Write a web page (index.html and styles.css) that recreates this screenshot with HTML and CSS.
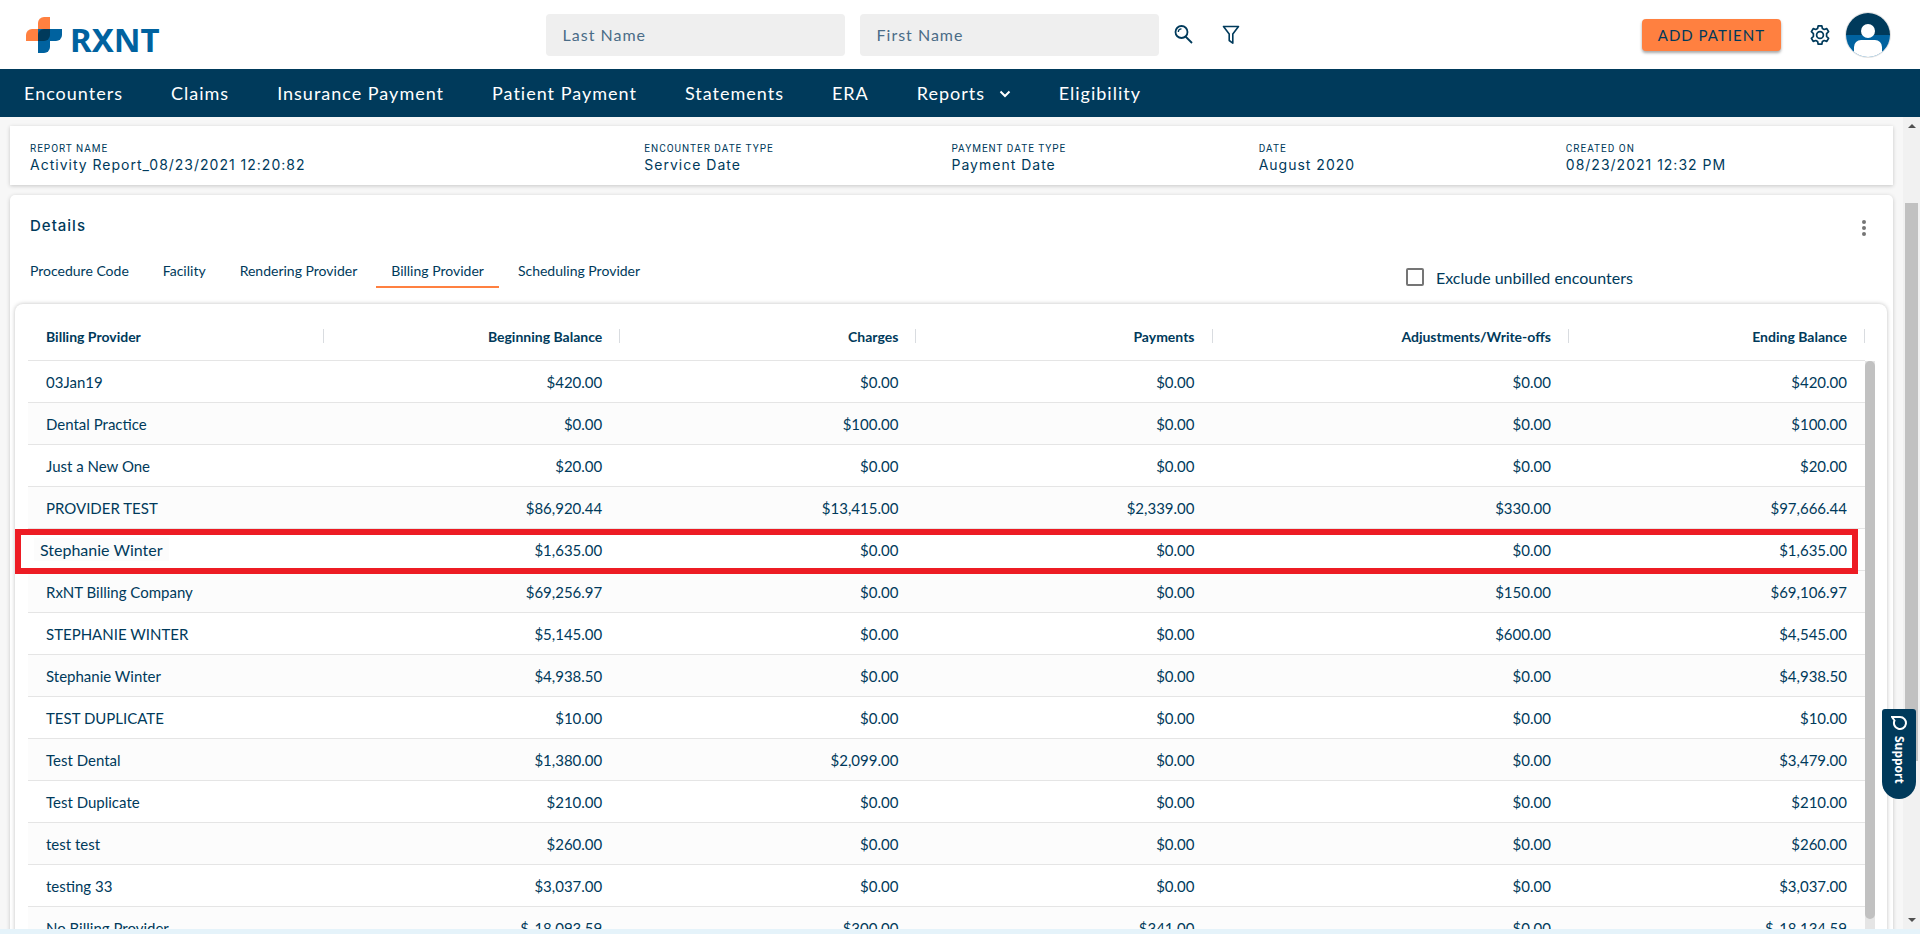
FILE: index.html
```
<!DOCTYPE html>
<html lang="en">
<head>
    <meta charset="UTF-8">
    <meta name="viewport" content="width=device-width, initial-scale=1.0">
    <title>RXNT - Activity Report</title>
    <link rel="stylesheet" href="styles.css">
</head>
<body>
    <header class="topbar">
        <a href="#" class="logo" aria-label="RXNT">
            <svg width="37" height="36" viewBox="0 0 37 36">
                <path d="M12 24V6a6 6 0 0 1 6-6h6v24z" fill="#ff8040"/>
                <path d="M0 24v-6a6 6 0 0 1 6-6h18v12z" fill="#ff8040"/>
                <path d="M12 12h24v6a6 6 0 0 1-6 6H12z" fill="#00629f"/>
                <path d="M12 12h12v18a6 6 0 0 1-6 6h-6z" fill="#00629f"/>
                <path d="M18 12h6v6a6 6 0 0 1-6 6h-6v-6a6 6 0 0 1 6-6z" fill="#003a5b"/>
            </svg>
            <span>RXNT</span>
        </a>
        <form class="search">
            <input type="text" placeholder="Last Name" aria-label="Last Name">
            <input type="text" placeholder="First Name" aria-label="First Name">
            <button type="button" class="icon-btn" aria-label="Search">
                <svg width="20" height="20" viewBox="0 0 20 20" fill="none" stroke="#003a5b" stroke-width="1.8">
                    <circle cx="7.5" cy="7" r="6"/>
                    <path d="M4.3 7A3.2 3.2 0 0 1 7.5 3.9" stroke-width="1.3"/>
                    <path d="M11.5 11.5L18 18"/>
                </svg>
            </button>
            <button type="button" class="icon-btn filter" aria-label="Filter">
                <svg width="18" height="20" viewBox="0 0 18 20" fill="none" stroke="#003a5b" stroke-width="1.6" stroke-linejoin="round">
                    <path d="M1.5 1.5h15L10.8 9v9.2L7.2 15.5V9z"/>
                </svg>
            </button>
        </form>
        <div class="actions">
            <button type="button" class="add">ADD PATIENT</button>
            <button type="button" class="icon-btn" aria-label="Settings">
                <svg width="22" height="22" viewBox="0 0 22 22" fill="none" stroke="#003a5b" stroke-width="1.7" stroke-linejoin="round">
                    <path d="M9.2 1.8h3.6l.6 2.7 1.8 1 2.6-.9 1.8 3.1-2 1.9v2.8l2 1.9-1.8 3.1-2.6-.9-1.8 1-.6 2.7H9.2l-.6-2.7-1.8-1-2.6.9-1.8-3.1 2-1.9V9.6l-2-1.9 1.8-3.1 2.6.9 1.8-1z"/>
                    <circle cx="11" cy="11" r="3.4"/>
                </svg>
            </button>
            <button type="button" class="icon-btn avatar" aria-label="Account">
                <svg width="46" height="46" viewBox="0 0 46 46">
                    <clipPath id="round"><circle cx="23" cy="23" r="22"/></clipPath>
                    <circle cx="23" cy="23" r="22.5" fill="#fff" stroke="#e2e2e2"/>
                    <g clip-path="url(#round)">
                        <rect width="46" height="23" fill="#003a5b"/>
                        <rect y="23" width="46" height="23" fill="#00629f"/>
                        <path d="M9 46V35a7 7 0 0 1 7-7h14a7 7 0 0 1 7 7v11z" fill="#fff"/>
                        <circle cx="23" cy="19" r="7" fill="#fff"/>
                    </g>
                </svg>
            </button>
        </div>
    </header>

    <nav class="menu">
        <a href="#">Encounters</a>
        <a href="#">Claims</a>
        <a href="#">Insurance Payment</a>
        <a href="#">Patient Payment</a>
        <a href="#">Statements</a>
        <a href="#">ERA</a>
        <a href="#">Reports
            <svg width="12" height="8" viewBox="0 0 12 8" fill="none" stroke="#fff" stroke-width="2"><path d="M1.5 1.5L6 6l4.5-4.5"/></svg>
        </a>
        <a href="#">Eligibility</a>
    </nav>

    <div class="page">
        <main class="content">
            <dl class="report">
                <div><dt>REPORT NAME</dt><dd>Activity Report_08/23/2021 12:20:82</dd></div>
                <div><dt>ENCOUNTER DATE TYPE</dt><dd>Service Date</dd></div>
                <div><dt>PAYMENT DATE TYPE</dt><dd>Payment Date</dd></div>
                <div><dt>DATE</dt><dd>August 2020</dd></div>
                <div><dt>CREATED ON</dt><dd>08/23/2021 12:32 PM</dd></div>
            </dl>

            <section class="details">
                <div class="details-head">
                    <h2>Details</h2>
                    <button type="button" class="icon-btn" aria-label="More">
                        <svg width="4" height="16" viewBox="0 0 4 16" fill="#757575">
                            <circle cx="2" cy="2" r="2"/><circle cx="2" cy="8" r="2"/><circle cx="2" cy="14" r="2"/>
                        </svg>
                    </button>
                </div>
                <div class="filters">
                    <div class="tabs">
                        <button type="button">Procedure Code</button>
                        <button type="button">Facility</button>
                        <button type="button">Rendering Provider</button>
                        <button type="button" class="active">Billing Provider</button>
                        <button type="button">Scheduling Provider</button>
                    </div>
                    <label class="exclude"><input type="checkbox"> Exclude unbilled encounters</label>
                </div>

                <div class="grid">
                    <div class="grid-body">
                        <table>
                            <thead>
                                <tr>
                                    <th>Billing Provider</th>
                                    <th>Beginning Balance</th>
                                    <th>Charges</th>
                                    <th>Payments</th>
                                    <th class="wide">Adjustments/Write-offs</th>
                                    <th>Ending Balance</th>
                                </tr>
                            </thead>
                            <tbody>
                                <tr><td>03Jan19</td><td>$420.00</td><td>$0.00</td><td>$0.00</td><td>$0.00</td><td>$420.00</td></tr>
                                <tr><td>Dental Practice</td><td>$0.00</td><td>$100.00</td><td>$0.00</td><td>$0.00</td><td>$100.00</td></tr>
                                <tr><td>Just a New One</td><td>$20.00</td><td>$0.00</td><td>$0.00</td><td>$0.00</td><td>$20.00</td></tr>
                                <tr><td>PROVIDER TEST</td><td>$86,920.44</td><td>$13,415.00</td><td>$2,339.00</td><td>$330.00</td><td>$97,666.44</td></tr>
                                <tr class="marked"><td><span>Stephanie Winter</span></td><td>$1,635.00</td><td>$0.00</td><td>$0.00</td><td>$0.00</td><td>$1,635.00</td></tr>
                                <tr><td>RxNT Billing Company</td><td>$69,256.97</td><td>$0.00</td><td>$0.00</td><td>$150.00</td><td>$69,106.97</td></tr>
                                <tr><td>STEPHANIE WINTER</td><td>$5,145.00</td><td>$0.00</td><td>$0.00</td><td>$600.00</td><td>$4,545.00</td></tr>
                                <tr><td>Stephanie Winter</td><td>$4,938.50</td><td>$0.00</td><td>$0.00</td><td>$0.00</td><td>$4,938.50</td></tr>
                                <tr><td>TEST DUPLICATE</td><td>$10.00</td><td>$0.00</td><td>$0.00</td><td>$0.00</td><td>$10.00</td></tr>
                                <tr><td>Test Dental</td><td>$1,380.00</td><td>$2,099.00</td><td>$0.00</td><td>$0.00</td><td>$3,479.00</td></tr>
                                <tr><td>Test Duplicate</td><td>$210.00</td><td>$0.00</td><td>$0.00</td><td>$0.00</td><td>$210.00</td></tr>
                                <tr><td>test test</td><td>$260.00</td><td>$0.00</td><td>$0.00</td><td>$0.00</td><td>$260.00</td></tr>
                                <tr><td>testing 33</td><td>$3,037.00</td><td>$0.00</td><td>$0.00</td><td>$0.00</td><td>$3,037.00</td></tr>
                                <tr><td>No Billing Provider</td><td>$-18,093.59</td><td>$300.00</td><td>$341.00</td><td>$0.00</td><td>$-18,134.59</td></tr>
                            </tbody>
                        </table>
                    </div>
                    <div class="grid-scroll"><div class="thumb"></div></div>
                </div>
            </section>
        </main>
        <div class="page-scroll">
            <svg width="8" height="4" viewBox="0 0 8 4"><path d="M0 4L4 0l4 4z" fill="#505050"/></svg>
            <div class="track"><div class="thumb"></div></div>
            <svg width="8" height="4" viewBox="0 0 8 4"><path d="M0 0l4 4 4-4z" fill="#505050"/></svg>
        </div>
    </div>
    <div class="bottom"></div>

    <button type="button" class="support">
        <svg width="16" height="16" viewBox="0 0 16 16" fill="none" stroke="#fff" stroke-width="2">
            <path d="M1 2h8a6 6 0 1 1-5.5 3.5z"/>
        </svg>
        <span>Support</span>
    </button>
</body>
</html>
```
FILE: styles.css
```
*, *::after {
    box-sizing: border-box;
}
body {
    margin: 0;
    height: 100vh;
    display: flex;
    flex-direction: column;
    overflow: hidden;
    background-color: #f7f7f7;
    color: #003a5b;
    font-family: Lato, "Open Sans", sans-serif;
    font-size: 15px;
}
button, input {
    font-family: inherit;
    color: inherit;
}
.icon-btn {
    display: flex;
    padding: 0;
    border: none;
    background: none;
    cursor: pointer;
}

/* top bar */
.topbar {
    flex: none;
    display: grid;
    grid-template-columns: 27% 1fr auto;
    align-items: center;
    height: 69px;
    padding: 0 29px 0 26px;
    background-color: white;
}
.logo {
    display: flex;
    align-items: flex-end;
    gap: 7px;
    color: #00629f;
    text-decoration: none;
}
.logo span {
    font-family: "Noto Sans", sans-serif;
    font-size: 33px;
    font-weight: bold;
    line-height: 26px;
}
.search {
    display: flex;
    align-items: center;
    gap: 15px;
    padding-left: 16px;
}
.search input {
    width: 299px;
    height: 42px;
    padding: 0 17px;
    border: none;
    border-radius: 4px;
    background-color: #efefef;
    font-size: 16px;
    letter-spacing: 1px;
}
.search input::placeholder {
    color: #4a6c87;
}
.filter {
    margin-left: 13px;
}
.actions {
    display: flex;
    align-items: center;
}
.add {
    height: 32px;
    margin-right: 28px;
    padding: 0 16px;
    border: none;
    border-radius: 4px;
    background-color: #ff8040;
    box-shadow: 0 2px 3px rgba(0, 0, 0, 0.35);
    font-size: 15px;
    letter-spacing: 1px;
    cursor: pointer;
}
.avatar {
    margin-left: 14px;
}

/* main menu */
.menu {
    flex: none;
    display: flex;
    align-items: center;
    gap: 48px;
    height: 48px;
    padding: 0 24px;
    background-color: #003a5b;
}
.menu a {
    color: white;
    font-size: 18px;
    letter-spacing: 1px;
    text-decoration: none;
}
.menu svg {
    margin-left: 8px;
    vertical-align: 2px;
}

/* page */
.page {
    flex: 1;
    display: flex;
    min-height: 0;
}
.content {
    flex: 1;
    display: flex;
    flex-direction: column;
    gap: 10px;
    min-width: 0;
    padding: 9px 10px 0;
    overflow: hidden;
}
.report {
    flex: none;
    display: grid;
    grid-template-columns: 2fr 1fr 1fr 1fr 1fr;
    margin: 0;
    padding: 16px 20px 11px;
    background-color: white;
    box-shadow: 0 1px 4px rgba(0, 0, 0, 0.2);
}
.report dt {
    font-family: Roboto, sans-serif;
    font-size: 10px;
    line-height: 14px;
    letter-spacing: 1px;
}
.report dd {
    margin: 0;
    font-family: Inter, sans-serif;
    font-size: 14px;
    line-height: 18px;
    letter-spacing: 1px;
}
.details {
    flex: none;
    padding: 0 6px 0 5px;
    border-radius: 5px;
    background-color: white;
    box-shadow: 0 1px 4px rgba(0, 0, 0, 0.2);
}
.details-head {
    display: flex;
    align-items: center;
    justify-content: space-between;
    height: 60px;
    padding: 0 21px 0 15px;
}
.details-head h2 {
    margin: 0;
    font-family: Inter, sans-serif;
    font-size: 15px;
    font-weight: 500;
    letter-spacing: 1px;
}
.details-head .icon-btn {
    padding-top: 6px;
}
.filters {
    display: grid;
    grid-template-columns: 3fr 1fr;
    height: 49px;
}
.tabs {
    display: flex;
    gap: 4px;
    height: 33px;
}
.tabs button {
    padding: 0 15px;
    border: none;
    border-bottom: 2px solid transparent;
    background: none;
    font-size: 14px;
    cursor: pointer;
}
.tabs .active {
    border-bottom-color: #ff8040;
}
.exclude {
    display: flex;
    align-items: center;
    gap: 12px;
    height: 44px;
    margin-left: -13px;
    font-size: 16px;
}
.exclude input {
    appearance: none;
    width: 18px;
    height: 18px;
    margin: 0;
    border: 2px solid #757575;
    border-radius: 2px;
}

/* balances table */
.grid {
    display: flex;
    padding: 0 12px 0 13px;
    border-radius: 8px;
    box-shadow: 0 0 4px rgba(0, 0, 0, 0.25);
}
.grid-body {
    flex: 1;
}
table {
    width: 100%;
    table-layout: fixed;
    border-collapse: separate;
    border-spacing: 0;
}
th, td {
    height: 42px;
    padding: 0 18px;
    border-bottom: 1px solid #e5e5e5;
    text-align: right;
}
th {
    height: 57px;
    padding-top: 8px;
    font-size: 14px;
    background: linear-gradient(#d9dce0, #d9dce0) no-repeat right 25px / 1px 14px;
}
th:first-child, td:first-child {
    text-align: left;
}
.wide {
    width: 19.4%;
}
tbody tr:nth-child(even) {
    background-color: #fcfcfc;
}
.marked {
    position: relative;
}
/* red frame lies over the row and both side gutters */
.marked td:first-child::after {
    content: "";
    position: absolute;
    top: 0;
    left: -13px;
    right: 7px;
    height: 45px;
    border: 6px solid #ed1c24;
}
.marked td:first-child {
    padding-left: 6px;
}
.marked span {
    padding: 2px 6px;
    background-color: #fcfcfc;
    font-size: 16px;
}
.grid-scroll {
    flex: none;
    width: 10px;
    margin: 57px 0 0;
    background-color: #e5e5e5;
}
.grid-scroll .thumb {
    height: 558px;
    border-radius: 5px;
    background-color: #c1c1c1;
}

/* page scrollbar */
.page-scroll {
    flex: none;
    display: flex;
    flex-direction: column;
    align-items: center;
    width: 17px;
    padding: 7px 0;
    background-color: #f1f1f1;
}
.track {
    flex: 1;
    width: 13px;
    padding-top: 75px;
}
.track .thumb {
    height: 78%;
    background-color: #c1c1c1;
}
.bottom {
    flex: none;
    height: 5px;
    background-color: #e5f3fa;
}

.support {
    position: fixed;
    right: 4px;
    bottom: 135px;
    display: flex;
    flex-direction: column;
    align-items: center;
    gap: 5px;
    width: 34px;
    height: 90px;
    padding: 6px 0 0;
    border: none;
    border-radius: 3px 3px 17px 17px;
    background-color: #003a5b;
    color: white;
    cursor: pointer;
}
.support span {
    writing-mode: vertical-rl;
    font-family: "Noto Sans", sans-serif;
    font-size: 12px;
    font-weight: bold;
}
```
